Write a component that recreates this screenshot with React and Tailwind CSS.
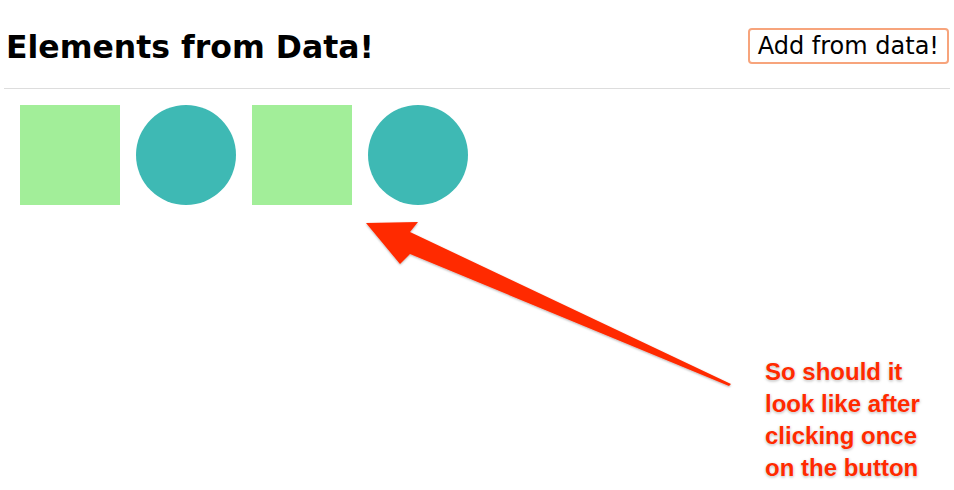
import React from "react";

const items = ["square", "circle", "square", "circle"];

const App = () => {
  return (
    <div className="relative w-[954px] h-[490px] bg-white overflow-hidden">
      <header className="mx-[4px] pt-[28px] pb-[22px] border-b border-[#dddddd] flex flex-row justify-between items-center">
        <h1 className="pl-[2px] text-[31.5px] leading-[38px] font-bold text-black font-['DejaVu_Sans',sans-serif]">
          Elements from Data!
        </h1>
        <button className="mr-[1px] -mt-[2px] h-[36px] px-[8px] border-2 border-[#f7a47c] rounded-[4px] bg-white text-[24px] leading-[28px] text-black font-['DejaVu_Sans',sans-serif]">
          Add from data!
        </button>
      </header>

      <div className="flex flex-row gap-[16px] pl-[20px] pt-[16px]">
        {items.map((type, i) =>
          type === "square" ? (
            <div key={i} className="w-[100px] h-[100px] bg-[#a2ee99]" />
          ) : (
            <div key={i} className="w-[100px] h-[100px] rounded-full bg-[#3eb9b4]" />
          )
        )}
      </div>

      {/* annotation arrow */}
      <svg
        className="absolute left-0 top-0"
        width="954"
        height="490"
        viewBox="0 0 954 490"
      >
        <defs>
          <filter id="sh" x="-10%" y="-10%" width="120%" height="120%">
            <feDropShadow dx="0" dy="1" stdDeviation="1" floodColor="#000" floodOpacity="0.3" />
          </filter>
        </defs>
        <path
          d="M366 223 L418 222 L410 232 L731 384 L729 386 L410 254 L400 264 Z"
          fill="#ff2a00"
          filter="url(#sh)"
        />
      </svg>

      <div className="absolute left-[765px] top-[356px] text-[24px] leading-[32px] font-bold text-[#ff2a00] font-['Liberation_Sans',sans-serif] [text-shadow:0_0_2px_#fff,0_1px_3px_rgba(0,0,0,0.35)]">
        <div>So should it</div>
        <div>look like after</div>
        <div>clicking once</div>
        <div>on the button</div>
      </div>
    </div>
  );
};

export default App;
